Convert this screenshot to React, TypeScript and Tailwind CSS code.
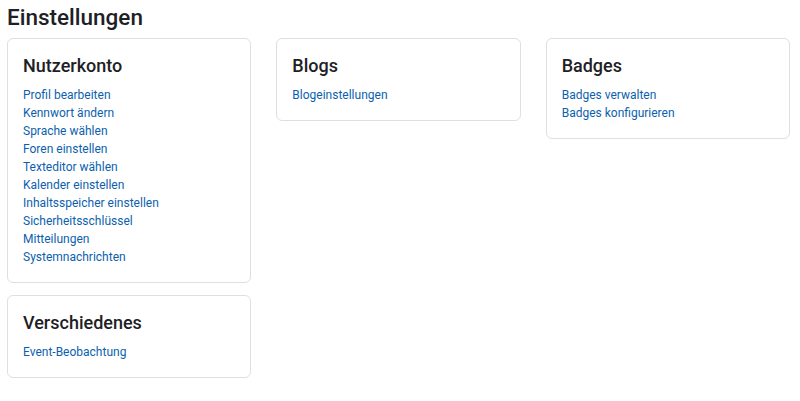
import React from "react";

const cards = [
  {
    title: "Nutzerkonto",
    links: [
      "Profil bearbeiten",
      "Kennwort ändern",
      "Sprache wählen",
      "Foren einstellen",
      "Texteditor wählen",
      "Kalender einstellen",
      "Inhaltsspeicher einstellen",
      "Sicherheitsschlüssel",
      "Mitteilungen",
      "Systemnachrichten",
    ],
  },
  { title: "Blogs", links: ["Blogeinstellungen"] },
  { title: "Badges", links: ["Badges verwalten", "Badges konfigurieren"] },
  { title: "Verschiedenes", links: ["Event-Beobachtung"] },
];

function Card({ title, links }: { title: string; links: string[] }) {
  return (
    <div className="rounded-[6px] border border-[#dedfe0] bg-white px-[15px] pt-4 pb-4">
      <h3 className="mb-[9.6px] text-[18px] font-medium leading-[21.6px] text-[#1d2125]">{title}</h3>
      <ul>
        {links.map((l) => (
          <li key={l} className="text-[12px] leading-[18px]">
            <a href="#" className="text-[#0c5fae]">
              {l}
            </a>
          </li>
        ))}
      </ul>
    </div>
  );
}

export default function App() {
  return (
    <div
      className="min-h-[401px] bg-white pl-[7px] pr-[10px] pt-[4px] text-[#1d2125]"
      style={{ fontFamily: "Roboto, 'Liberation Sans', sans-serif" }}
    >
      <h2 className="mb-[7px] text-[22.5px] font-medium leading-[27px]">Einstellungen</h2>
      <div className="grid grid-cols-3 items-start gap-x-[25px]">
        <div className="flex flex-col gap-[12px]">
          <Card {...cards[0]} />
          <Card {...cards[3]} />
        </div>
        <Card {...cards[1]} />
        <Card {...cards[2]} />
      </div>
    </div>
  );
}
